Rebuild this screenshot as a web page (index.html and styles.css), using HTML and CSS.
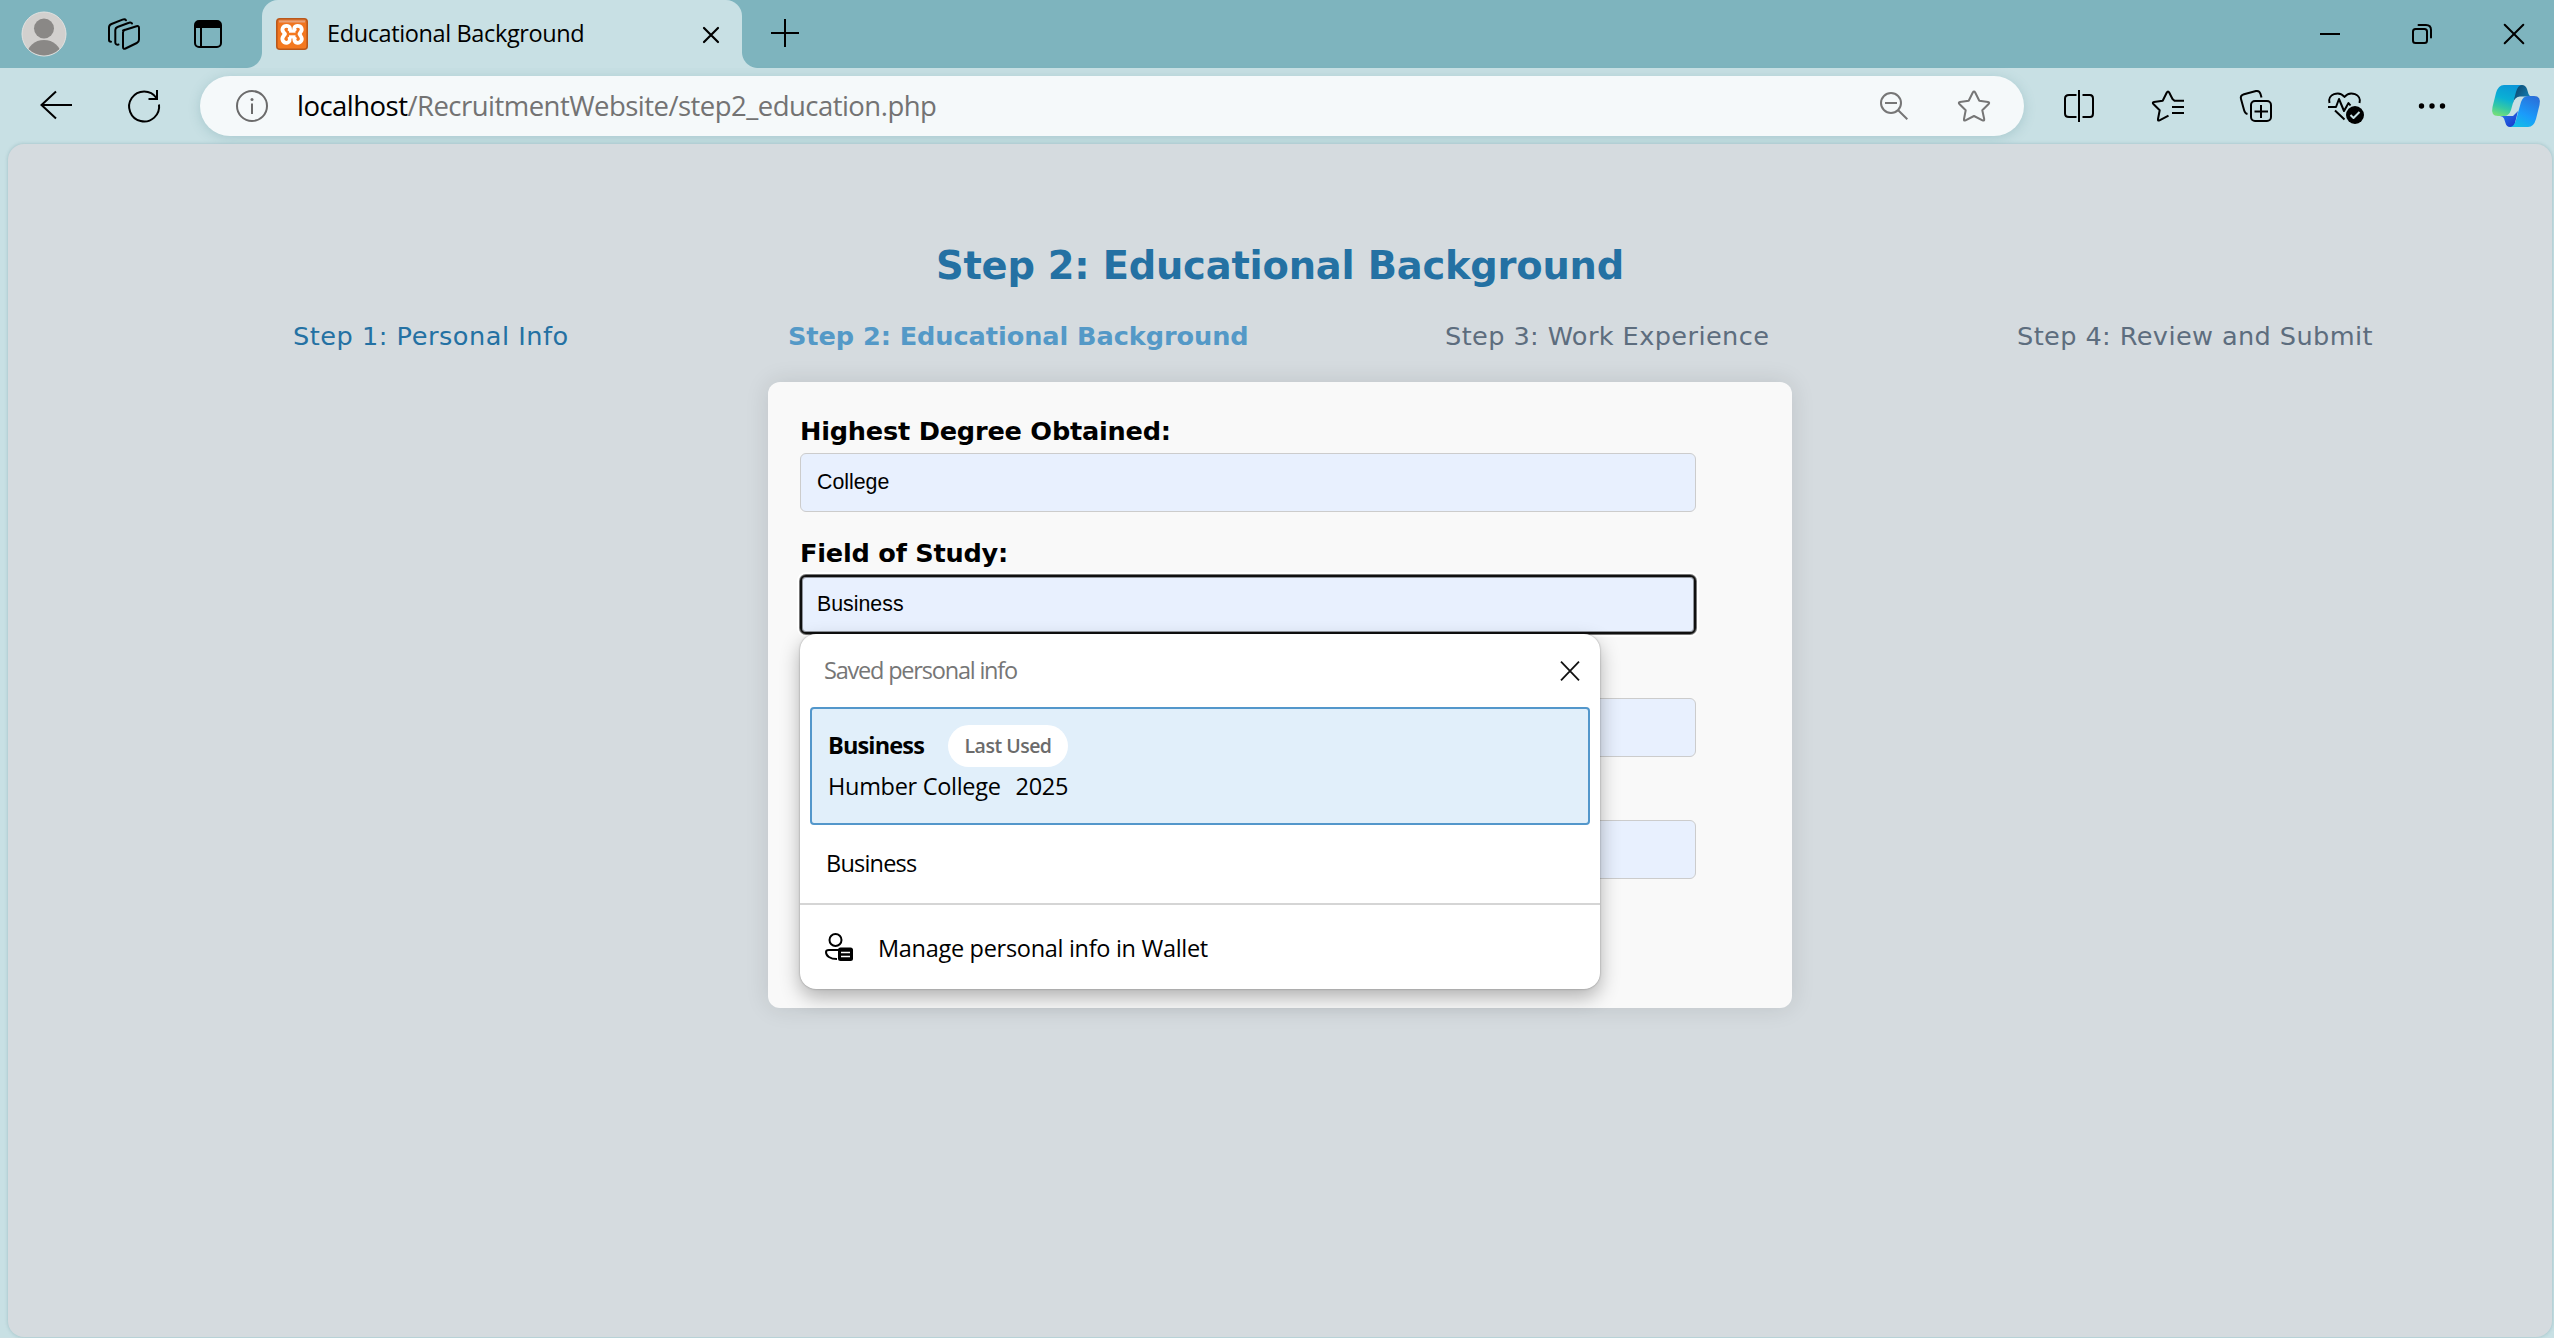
FILE: index.html
```html
<!DOCTYPE html>
<html lang="en">
<head>
<meta charset="utf-8">
<title>Educational Background</title>
<link rel="stylesheet" href="styles.css">
</head>
<body>
<div class="browser">
  <header class="tabstrip">
    <svg class="avatar" viewBox="0 0 46 46"><defs><clipPath id="face"><circle cx="23" cy="23" r="21.5"/></clipPath></defs><circle cx="23" cy="23" r="22" fill="#d2d0ce" stroke="#e3e2e0" stroke-width="1"/><g fill="#8a8886" clip-path="url(#face)"><circle cx="23" cy="17.5" r="10"/><ellipse cx="23" cy="44" rx="17" ry="15"/></g></svg>
    <svg class="workspaces" viewBox="0 0 32 32" fill="none" stroke="#000" stroke-width="2" stroke-linecap="round" stroke-linejoin="round"><path d="M15 12.5 28.500 8.300Q31 7.500 31 10V21.500Q31 24 28.800 25L17.500 30.500Q15 31.600 15 29V14.500Q15 12.500 17 11.800Z"/><path d="M24 5.500 23.500 5Q22.500 4.200 21 4.800L9.500 9Q7.300 10 7.300 12V24.500Q7.300 27 10.500 26.600"/><path d="M18 2.200Q17 .7 14.500 1.600L3.500 6Q1 7 1 9.500V22Q1 23.800 3 23.800"/></svg>
    <svg class="tab-actions" viewBox="0 0 28 28"><rect x="1" y="1" width="26" height="26" rx="4" fill="none" stroke="#000" stroke-width="2"/><path d="M1 8V4.500Q1 1 4.500 1h19Q27 1 27 4.500V8Z"/><path d="M7 8V27" stroke="#000" stroke-width="2"/></svg>
    <div class="tab">
      <svg class="favicon" viewBox="0 0 32 32"><defs><linearGradient id="orange" x2="0" y2="1"><stop offset="0" stop-color="#dd7a3b"/><stop offset=".15" stop-color="#f0741f"/><stop offset="1" stop-color="#f57a20"/></linearGradient></defs><rect x=".8" y=".8" width="30.400" height="30.400" rx="3" fill="url(#orange)" stroke="#b9581b" stroke-width="1.600"/><path d="M3 3.500H29" stroke="#e9a176" stroke-width="2"/><path d="M13 13.500H19.500M13 18.500H19.500M13 13.300C15.200 10.500 13.500 7.800 10.600 7.800C7 7.800 5 11.500 7.700 14.300L9 16L7.500 18C4.800 21.500 7.500 24.800 10.400 24.800C13.400 24.800 15 21.500 13 18.700M19.500 13.300C17 10.500 18.700 7.800 21.500 7.800C25.500 7.800 27 11.500 24.500 14.300L23.500 16L24.700 18C27.200 21.500 25 24.800 21.800 24.800C18.700 24.800 17.200 21.500 19.500 18.700" fill="none" stroke="#fff" stroke-width="3.800" stroke-linejoin="round"/><path d="M12 16H20.500" stroke="#f57a20" stroke-width="2.600"/></svg>
      <span class="tab-title">Educational Background</span>
      <svg class="tab-close" viewBox="0 0 16 16"><path d="M1 1 15 15M15 1 1 15" stroke="#000" stroke-width="2.200" stroke-linecap="round"/></svg>
    </div>
    <svg class="new-tab" viewBox="0 0 28 28"><path d="M0 14H28M14 0V28" stroke="#000" stroke-width="2"/></svg>
    <div class="window-controls">
      <svg viewBox="0 0 20 20"><path d="M0 10H20" stroke="#000" stroke-width="2"/></svg>
      <svg viewBox="0 0 20 20" fill="none" stroke="#000" stroke-width="2" stroke-linecap="round"><rect x="1" y="5" width="14" height="14" rx="2.500"/><path d="M6.500 1H14Q19 1 19 6V13.500"/></svg>
      <svg viewBox="0 0 20 20"><path d="M.7.7 19.300 19.300M19.300.7.7 19.300" stroke="#000" stroke-width="2" stroke-linecap="round"/></svg>
    </div>
  </header>

  <div class="toolbar">
    <svg class="back" viewBox="0 0 32 32" fill="none" stroke="#000" stroke-width="2"><path d="M32 15H1.500M16 1.500 1.500 15 16 28.500"/></svg>
    <svg class="refresh" viewBox="0 0 32 32" fill="none" stroke="#000" stroke-width="2"><path d="M31 14.500A15 15 0 1 1 28.500 8M29 0V9H20.500"/></svg>
    <div class="address">
      <svg class="info" viewBox="0 0 32 32"><circle cx="16" cy="16" r="15" fill="none" stroke="#6b6b6b" stroke-width="2"/><path d="M16 13.500V24" stroke="#6b6b6b" stroke-width="2"/><circle cx="16" cy="9.500" r="1.500" fill="#6b6b6b"/></svg>
      <span class="url"><span class="host">localhost</span>/RecruitmentWebsite/step2_education.php</span>
      <svg class="zoom-out" viewBox="0 0 28 28" fill="none" stroke="#767676" stroke-width="2"><circle cx="11" cy="11" r="10"/><path d="M5 11H17M18.200 18.200 27.300 27.300"/></svg>
      <svg class="star" viewBox="0 0 32 32" fill="none" stroke="#767676" stroke-width="2" stroke-linejoin="round"><path d="M14.800 2.500Q16 .5 17.200 2.500L21.300 10.800 30 12Q32 12.500 30.600 14L24.300 20.300 26.200 29Q26.400 31.200 24.500 30.400L16 26 7.500 30.400Q5.600 31.200 6 29L7.700 20.300 1.400 14Q0 12.500 2 12L10.700 10.800Z"/></svg>
    </div>
    <div class="tools">
      <svg viewBox="0 0 36 36" fill="none" stroke="#000" stroke-width="2"><path d="M14.500 7H7Q3 7 3 10.500V25.500Q3 29 7 29H14.500M20.500 7H28Q31 7 31 10.500V25.500Q31 29 28 29H20.500M17 2V34"/></svg>
      <svg viewBox="0 0 36 36" fill="none" stroke="#000" stroke-width="2" stroke-linejoin="round"><path d="M34 12.800H24.500L22.500 11 19.200 4.500Q18 2.300 16.800 4.500L12.700 12.800 4 14Q2 14.500 3.400 16L9.700 22.300 8 31Q7.600 33.200 9.500 32.400L18.500 27.700M22 19H34M22 25H34"/></svg>
      <svg viewBox="0 0 36 36" fill="none" stroke="#000" stroke-width="2"><rect x="13" y="13" width="20" height="20" rx="4"/><path d="M23 17V30M16.500 23.500H30M23.500 9.500 22.500 6Q21.500 2.300 18 3L6 6.300Q2 7.500 3 11L6.200 22.500Q7 25.500 9.500 26"/></svg>
      <svg viewBox="0 0 36 36" fill="none" stroke="#000" stroke-width="2" stroke-linejoin="round"><g transform="translate(2 1.500)"><path d="M1.500 13.500C-1 5 11 .5 16.500 7.500C22 .5 34 5 31.500 13.500M0 17.500H8L11 9.500 16 21.500 20.500 13.500 22.500 16M7 21 16.500 30"/><circle cx="27" cy="25.500" r="9" fill="#000" stroke="none"/><path d="M22.500 25.500 25.500 28.500 31.500 22.500" stroke="#c8e0e4"/></g></svg>
      <svg viewBox="0 0 36 36"><circle cx="7.500" cy="18" r="2.700"/><circle cx="18" cy="18" r="2.700"/><circle cx="28.500" cy="18" r="2.700"/></svg>
    </div>
    <svg class="copilot" viewBox="0 0 48 42"><defs><linearGradient id="c1" x1=".6" x2=".3" y2="1"><stop offset="0" stop-color="#0a97d8"/><stop offset=".45" stop-color="#0ab0d4"/><stop offset=".75" stop-color="#35c9a4"/><stop offset="1" stop-color="#72dd7c"/></linearGradient><linearGradient id="c2" x1=".8" x2=".3" y2="1"><stop offset="0" stop-color="#2a6fd8"/><stop offset=".6" stop-color="#1a9bfb"/><stop offset="1" stop-color="#13bce8"/></linearGradient><linearGradient id="c3" x2="1" y2=".6"><stop offset="0" stop-color="#0c3f63"/><stop offset="1" stop-color="#1482b8"/></linearGradient><linearGradient id="c4" x2="1" y2="1"><stop offset="0" stop-color="#2a7df0"/><stop offset="1" stop-color="#1632c8"/></linearGradient></defs><path d="M24 0H30Q33.500 0 35 4L36.500 9Q37.500 11.500 40 11.500H28Q23 11.500 21 18Z" fill="url(#c3)"/><path d="M9 31H21L26 26 22 42H18Q14.500 42 13.500 38L12 33.500Q11 31 8 31Z" fill="url(#c4)"/><path d="M12 0H30Q26 0 24 7L19 25Q17 31 12 31H6Q-1.500 31 .5 22L4 8Q6.300 0 12 0Z" fill="url(#c1)"/><path d="M36 42H18Q22 42 24 35L29 17Q31 11 36 11H42Q49.500 11 47.500 20L44 34Q41.700 42 36 42Z" fill="url(#c2)"/></svg>
  </div>

  <main class="page">
    <h1 class="title">Step 2: Educational Background</h1>
    <nav class="steps">
      <a class="step done">Step 1: Personal Info</a>
      <a class="step current">Step 2: Educational Background</a>
      <a class="step">Step 3: Work Experience</a>
      <a class="step">Step 4: Review and Submit</a>
    </nav>
    <form class="card">
      <label class="label">Highest Degree Obtained:</label>
      <div class="field">College</div>
      <label class="label">Field of Study:</label>
      <div class="field focused">Business
        <div class="autofill">
          <div class="autofill-head"><span>Saved personal info</span><svg viewBox="0 0 20 20"><path d="M1 .7 19 19.300M19 .7 1 19.300" stroke="#111" stroke-width="1.800"/></svg></div>
          <div class="suggestion">
            <div class="primary"><b>Business</b><span class="pill">Last Used</span></div>
            <div class="secondary"><span>Humber College</span><span>2025</span></div>
          </div>
          <div class="plain">Business</div>
          <div class="manage"><svg viewBox="0 0 28 28"><g fill="none" stroke="#000" stroke-width="2"><circle cx="10.500" cy="7" r="6"/><path d="M14 17H4Q1 17 1 19C1 23 5 26 12 26"/></g><rect x="13" y="14.500" width="15" height="13.500" rx="2.500"/><path d="M16 19.500H25M16 23.500H25" stroke="#fff" stroke-width="1.500"/></svg><span>Manage personal info in Wallet</span></div>
        </div>
      </div>
      <div class="field covered"></div>
      <div class="field covered"></div>
    </form>
  </main>
</div>
</body>
</html>
```
FILE: styles.css
```css
* { box-sizing: border-box; }
body { margin: 0; background: #c8e0e4; color: #000; font-family: "Open Sans", "Noto Sans", sans-serif; }
svg { display: block; flex: none; overflow: visible; }
.browser { display: flex; flex-direction: column; width: 2554px; height: 1338px; overflow: hidden; }

.tabstrip { display: flex; align-items: center; height: 68px; background: #7eb4be; flex: none; padding-left: 21px; }
.avatar { width: 46px; height: 46px; }
.workspaces { width: 32px; height: 32px; margin-left: 41px; }
.tab-actions { width: 28px; height: 28px; margin-left: 54px; }
.tab { position: relative; display: flex; align-items: center; width: 480px; height: 68px; margin-left: 40px; padding-left: 14px; background: #c8e0e4; border-radius: 16px 16px 0 0; }
.tab::before, .tab::after { content: ""; position: absolute; bottom: 0; width: 16px; height: 16px; }
.tab::before { left: -16px; background: radial-gradient(circle at 0 0, transparent 15.5px, #c8e0e4 16.5px); }
.tab::after { right: -16px; background: radial-gradient(circle at 100% 0, transparent 15.5px, #c8e0e4 16.5px); }
.favicon { width: 32px; height: 32px; }
.tab-title { margin-left: 19px; padding-bottom: 2px; font-size: 23.5px; line-height: 32px; letter-spacing: -.38px; white-space: nowrap; }
.tab-close { width: 16px; height: 16px; margin-left: auto; margin-right: 23px; margin-top: 2px; }
.new-tab { width: 28px; height: 28px; margin-left: 29px; margin-bottom: 2px; }
.window-controls { display: flex; gap: 72px; margin-left: auto; margin-right: 30px; }
.window-controls svg { width: 20px; height: 20px; }

.toolbar { display: flex; align-items: center; height: 76px; padding-left: 40px; flex: none; }
.back, .refresh { width: 32px; height: 32px; }
.refresh { margin-left: 56px; }
.address { display: flex; align-items: center; width: 1824px; height: 60px; margin-left: 40px; padding-left: 36px; border-radius: 30px; background: #f5f9fa; box-shadow: 0 2px 12px rgba(70, 130, 140, .25); }
.info { width: 32px; height: 32px; }
.url { margin-left: 29px; font-size: 27.5px; line-height: 36px; letter-spacing: -.53px; color: #737373; white-space: nowrap; }
.host { color: #000; }
.zoom-out { width: 28px; height: 28px; margin-left: auto; }
.star { width: 32px; height: 32px; margin-left: 50px; margin-right: 34px; }
.tools { display: flex; gap: 52px; margin-left: 38px; }
.tools svg { width: 36px; height: 36px; }
.copilot { width: 48px; height: 42px; margin-left: 42px; }

.page { flex: none; width: 2544px; height: 1193px; margin-left: 8px; padding-top: 99px; border-radius: 16px; background: #d5dbdf; box-shadow: 0 0 3px 1px rgba(80, 130, 140, .22); font-family: "DejaVu Sans", sans-serif; }
.title { margin: 0; font-size: 38.4px; line-height: 46px; letter-spacing: -.2px; text-align: center; color: #2471a3; white-space: nowrap; }
.steps { display: grid; grid-template-columns: 495px 657px 572px 1fr; margin-top: 31px; padding-left: 285px; font-size: 25.6px; line-height: 32px; letter-spacing: .4px; color: #5d6d7e; white-space: nowrap; }
.done { color: #2471a3; letter-spacing: .52px; }
.current { color: #5499c7; font-weight: bold; letter-spacing: -.07px; }
.card { display: block; width: 1024px; height: 626px; margin: 30px auto 0; padding: 33px 32px 0; border-radius: 12px; background: #f9f9f9; box-shadow: 0 0 24px rgba(0, 0, 0, .11); }
.label { display: block; margin-bottom: 6px; font-size: 25.6px; font-weight: bold; line-height: 32px; letter-spacing: -.22px; white-space: nowrap; }
.field { position: relative; width: 896px; height: 59px; margin-bottom: 25px; padding-left: 16px; border: 1px solid #ccc; border-radius: 6px; background: #e8f0fe; font: 21.33px/56px "Liberation Sans", sans-serif; }
.focused { padding-left: 15px; border: 2px solid #101010; line-height: 54px; box-shadow: inset 0 0 0 1px #8f949c, 0 0 0 1px #777, 0 0 0 3px #fff; }
.covered { margin-top: 64px; }
.covered + .covered { margin-top: 63px; }

.autofill { position: absolute; left: -2px; top: 57px; z-index: 1; width: 800px; height: 355px; border-radius: 16px; background: #fff; box-shadow: 0 0 2px rgba(0, 0, 0, .35), 0 8px 20px rgba(0, 0, 0, .3); font: 23.5px/34px "Open Sans", "Noto Sans", sans-serif; letter-spacing: -.3px; white-space: nowrap; }
.autofill-head { display: flex; align-items: center; justify-content: space-between; height: 73px; padding: 0 20px 2px 24px; color: #767676; letter-spacing: -1.2px; }
.autofill-head svg { width: 20px; height: 20px; margin-top: 2px; }
.suggestion { height: 118px; margin: 0 10px; padding: 16px 17px 0 16px; border: 2px solid #5397cb; border-radius: 4px; background: #e1effa; }
.primary { display: flex; align-items: center; height: 42px; }
.primary b { width: 120px; padding-bottom: 2px; letter-spacing: -.85px; }
.pill { display: flex; align-items: center; justify-content: center; width: 120px; height: 42px; border-radius: 21px; background: #fff; color: #6b6b6b; font-size: 19.5px; font-weight: 600; letter-spacing: -.5px; }
.secondary { display: flex; gap: 15px; margin-top: 2px; }
.plain { display: flex; align-items: center; height: 78px; padding: 0 0 3px 26px; letter-spacing: -.8px; }
.manage { display: flex; align-items: center; height: 86px; padding-left: 25px; border-top: 2px solid #d5d5d5; }
.manage svg { width: 28px; height: 28px; margin-right: 25px; }
.manage span { padding-top: 2px; }
```
